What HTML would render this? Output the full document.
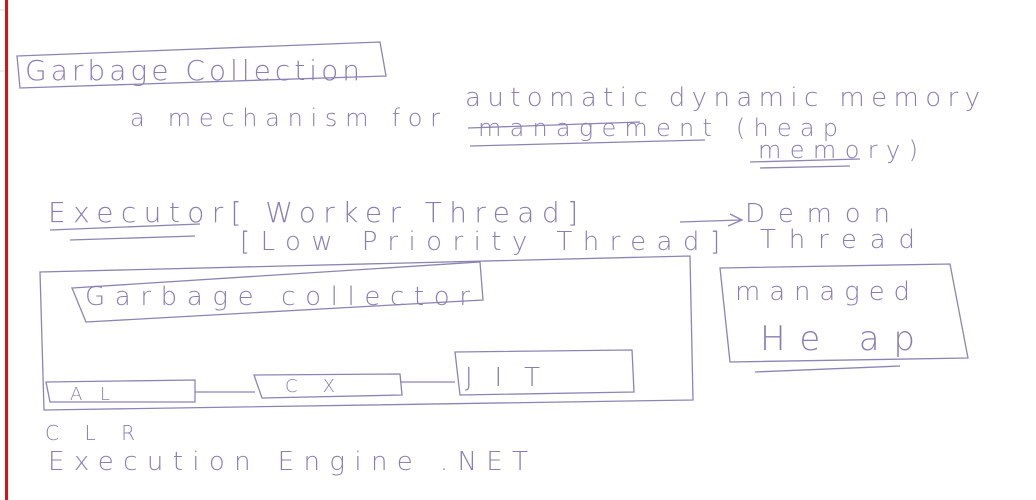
<!DOCTYPE html>
<html><head><meta charset="utf-8"><style>
html,body{margin:0;padding:0;background:#fff;width:1036px;height:500px;overflow:hidden}
svg text{font-family:"DejaVu Sans","Liberation Sans",sans-serif;font-weight:200;fill:#8a7db3}
</style></head><body>
<svg width="1036" height="500" viewBox="0 0 1036 500" xmlns="http://www.w3.org/2000/svg">
<rect x="5" y="0" width="3" height="500" fill="#e01010"/>
<line x1="0" y1="10" x2="5" y2="10" stroke="#ddd"/>
<line x1="0" y1="71" x2="5" y2="71" stroke="#ddd"/>
<g fill="none" stroke="#8e84b3" stroke-width="1.3">
<path d="M17 56 L380 42 L386 76 L20 88 Z"/>
<path d="M468 128 L640 122"/>
<path d="M470 146 L705 140"/>
<path d="M750 162 L860 159"/>
<path d="M760 168 L850 166"/>
<path d="M50 230 L200 224"/>
<path d="M70 240 L195 236"/>
<path d="M40 272 L690 256 L693 400 L44 410 Z"/>
<path d="M72 288 L480 262 L483 300 L86 322 Z"/>
<path d="M720 268 L950 264 L968 358 L730 362 Z"/>
<path d="M755 372 L900 366"/>
<path d="M46 382 L195 380 L195 402 L50 402 Z"/>
<path d="M195 392 L255 392"/>
<path d="M254 375 L400 374 L402 395 L262 398 Z"/>
<path d="M400 382 L455 382"/>
<path d="M455 352 L632 350 L634 392 L460 395 Z"/>
<path d="M680 222 L740 220 M730 214 L742 220 L728 226"/>
</g>
<text x="25" y="80" font-size="28" textLength="335">Garbage Collection</text>
<text x="130" y="126" font-size="24" textLength="310">a mechanism for</text>
<text x="465" y="106" font-size="26" textLength="515">automatic dynamic memory</text>
<text x="478" y="136" font-size="24" textLength="360">management (heap</text>
<text x="758" y="158" font-size="24" textLength="160">memory)</text>
<text x="48" y="222" font-size="28" textLength="530">Executor[ Worker Thread]</text>
<text x="240" y="250" font-size="26" textLength="480">[Low Priority Thread]</text>
<text x="745" y="222" font-size="26" textLength="145">Demon</text>
<text x="760" y="248" font-size="26" textLength="155">Thread</text>
<text x="85" y="305" font-size="26" textLength="385">Garbage collector</text>
<text x="735" y="300" font-size="26" textLength="175">managed</text>
<text x="760" y="350" font-size="34" textLength="155">He ap</text>
<text x="70" y="400" font-size="18" textLength="40">AL</text>
<text x="285" y="392" font-size="18" textLength="50">CX</text>
<text x="465" y="386" font-size="26" textLength="75">JIT</text>
<text x="45" y="440" font-size="20" textLength="90">CLR</text>
<text x="48" y="470" font-size="26" textLength="480">Execution Engine .NET</text>
</svg>
</body></html>
